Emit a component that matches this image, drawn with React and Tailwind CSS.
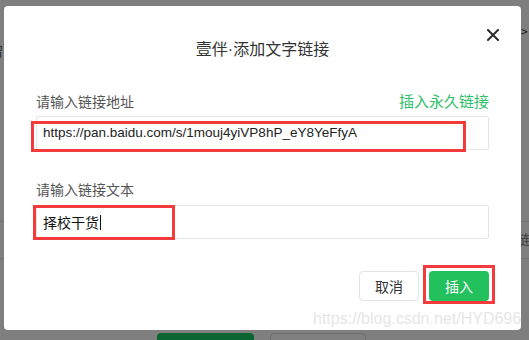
import React from "react";

const font = { fontFamily: '"Microsoft YaHei", "Noto Sans CJK SC", "Liberation Sans", sans-serif' };
const latin = { fontFamily: '"Liberation Sans", Arial, sans-serif' };

const App = () => {
  return (
    <div
      className="relative w-[529px] h-[340px] overflow-hidden bg-[#7f7f7f]"
      style={font}
    >
      {/* page behind the overlay */}
      <span className="absolute left-[-10px] top-[44px] text-[13px] leading-[14px] text-[#2a2a2a]">留</span>
      <span className="absolute left-[521px] top-[24px] text-[12px] leading-[14px] text-[#1a1a1a]">&gt;</span>
      <span className="absolute left-[517px] top-[232px] text-[13px] leading-[14px] text-[#3a3a3a]">链</span>
      <div className="absolute left-0 top-[221px] w-[529px] h-px bg-[#747474]" />
      <div className="absolute left-0 top-[258px] w-[529px] h-px bg-[#747474]" />
      <div className="absolute left-[157px] top-[333px] flex gap-[16px]">
        <div className="w-[97px] h-[20px] rounded-[4px] bg-[#0a6533]" />
        <div className="w-[96px] h-[20px] rounded-[4px] border border-[#6e6e6e] bg-[#808080]" />
      </div>

      {/* dialog */}
      <div className="absolute left-[4px] top-[6px] w-[517px] h-[324px] rounded-[4px] bg-white px-8">
        <svg
          className="absolute left-[483px] top-[23px]"
          width="12"
          height="12"
          viewBox="0 0 12 12"
        >
          <path d="M1 1 L11 11 M11 1 L1 11" stroke="#2b2b2b" strokeWidth="2" strokeLinecap="square" />
        </svg>

        <h2 className="pt-[32px] text-center text-[16px] leading-[20px] font-normal text-[#333333]">
          壹伴<span style={latin}>·</span>添加文字链接
        </h2>

        <div className="mt-[31px] flex items-center justify-between text-[14px] leading-[20px]">
          <span className="text-[#555555]">请输入链接地址</span>
          <span className="text-[15px] text-[#2cc068]">插入永久链接</span>
        </div>

        <div className="relative mt-[5px] h-[34px] rounded-[2px] border border-[#e5e5e5] flex items-center pl-[6px]">
          <span className="text-[13.5px] text-[#222222]" style={latin}>
            https://pan.baidu.com/s/1mouj4yiVP8hP_eY8YeFfyA
          </span>
          <div className="absolute left-[-6px] top-[4px] w-[435px] h-[31px] border-[3px] border-[#f33b3b]" />
        </div>

        <div className="mt-[29px] text-[14px] leading-[20px] text-[#555555]">请输入链接文本</div>

        <div className="relative mt-[6px] h-[34px] rounded-[2px] border border-[#e5e5e5] flex items-center pl-[6px]">
          <span className="text-[14px] text-[#111111]">择校干货</span>
          <span className="ml-px w-px h-[15px] bg-[#111111]" />
          <div className="absolute left-[-4px] top-[-1px] w-[142px] h-[35px] border-[3px] border-[#f33b3b]" />
        </div>

        <div className="mt-[32px] flex justify-end gap-[10px]">
          <button className="w-[60px] h-[30px] rounded-[4px] border border-[#e3e3e3] bg-white text-[14px] text-[#333333]">
            取消
          </button>
          <div className="relative">
            <button className="w-[60px] h-[30px] rounded-[4px] bg-[#22c15e] text-[14px] text-white">
              插入
            </button>
            <div className="absolute left-[-6px] top-[-6px] w-[72px] h-[39px] border-[3px] border-[#f33b3b]" />
          </div>
        </div>
      </div>

      {/* watermark */}
      <span
        className="absolute left-[313px] top-[309px] text-[16px] leading-[20px] text-[#e6e6e6]"
        style={latin}
      >
        https://blog.csdn.net/HYD696
      </span>
    </div>
  );
};

export default App;
